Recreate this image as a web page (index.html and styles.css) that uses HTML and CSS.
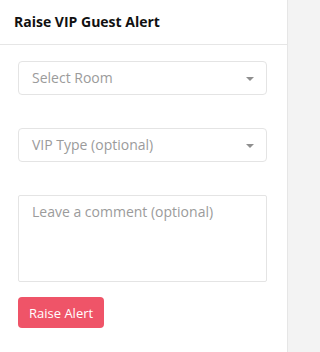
FILE: index.html
```html
<!DOCTYPE html>
<html>
<head>
<meta charset="utf-8">
<link rel="stylesheet" href="styles.css">
</head>
<body>
<div class="panel">
  <div class="panel-header">Raise VIP Guest Alert</div>
  <form class="panel-body">
    <div class="field">
      <div class="select">
        <span class="placeholder">Select Room</span>
        <span class="caret"></span>
      </div>
    </div>
    <div class="field">
      <div class="select">
        <span class="placeholder">VIP Type (optional)</span>
        <span class="caret"></span>
      </div>
    </div>
    <div class="field field-last">
      <textarea class="comment" placeholder="Leave a comment (optional)"></textarea>
    </div>
    <div class="actions">
      <button type="button" class="btn-alert">Raise Alert</button>
    </div>
  </form>
</div>
</body>
</html>
```
FILE: styles.css
```css
html, body {
  margin: 0;
  padding: 0;
  background: #f3f3f3;
  font-family: "Open Sans", "Liberation Sans", sans-serif;
}
.panel {
  width: 287px;
  height: 352px;
  background: #ffffff;
  border-right: 1px solid #e6e6e6;
}
.panel-header {
  height: 45px;
  box-sizing: border-box;
  padding: 12px 14px 0;
  line-height: 20px;
  font-size: 14px;
  font-weight: 700;
  color: #111111;
  border-bottom: 1px solid #e6e6e6;
}
.panel-body {
  margin: 0;
  padding: 16px 20px 0 18px;
  display: flex;
  flex-direction: column;
}
.field {
  margin-bottom: 33px;
}
.field-last {
  margin-bottom: 15px;
}
.select {
  height: 34px;
  box-sizing: border-box;
  border: 1px solid #e4e4e4;
  border-radius: 4px;
  display: flex;
  align-items: center;
  justify-content: space-between;
  padding: 0 12px 0 13px;
}
.placeholder {
  font-size: 14px;
  line-height: 20px;
  color: #9b9b9b;
}
.caret {
  width: 0;
  height: 0;
  border-left: 4px solid transparent;
  border-right: 4px solid transparent;
  border-top: 4px solid #8f8f8f;
  margin-top: 1px;
}
.comment {
  display: block;
  width: 100%;
  height: 87px;
  box-sizing: border-box;
  margin: 0;
  border: 1px solid #e4e4e4;
  border-radius: 2px;
  padding: 6px 13px;
  font-family: "Open Sans", "Liberation Sans", sans-serif;
  font-size: 14px;
  line-height: 20px;
  resize: none;
  outline: none;
}
.comment::placeholder {
  color: #9b9b9b;
}
.actions {
  display: flex;
}
.btn-alert {
  height: 31px;
  padding: 0 11px;
  border: none;
  border-radius: 4px;
  background: #ef5468;
  color: #ffffff;
  font-family: "Open Sans", "Liberation Sans", sans-serif;
  font-size: 13px;
  line-height: 18px;
  cursor: pointer;
}
```
